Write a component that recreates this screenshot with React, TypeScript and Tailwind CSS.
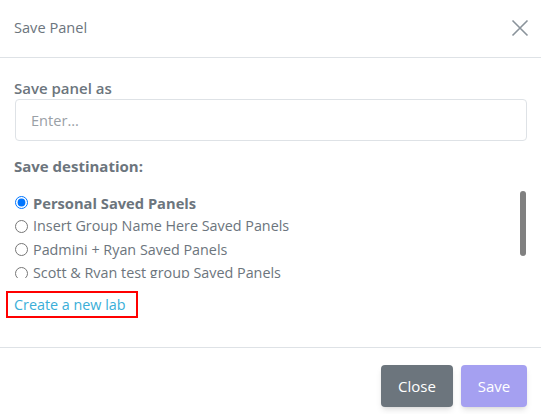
import React from "react";

const rows = [
  { label: "Personal Saved Panels", checked: true },
  { label: "Insert Group Name Here Saved Panels", checked: false },
  { label: "Padmini + Ryan Saved Panels", checked: false },
  { label: "Scott & Ryan test group Saved Panels", checked: false },
];

export default function App() {
  return (
    <div className="w-[541px] h-[414px] bg-white text-[#6c757d] flex flex-col" style={{ fontFamily: '"Open Sans", "Noto Sans", sans-serif' }}>
      <div className="h-[58px] border-b border-[#dee2e6] flex items-center justify-between pl-[14px] pr-[12px] shrink-0">
        <span className="text-[14.6px] text-[#6c757d] mt-[-2px]">Save Panel</span>
        <svg width="18" height="18" viewBox="0 0 18 18" className="text-[#8a939b] mt-[-2px]">
          <path d="M1.5 1.5 L16.5 16.5 M16.5 1.5 L1.5 16.5" stroke="currentColor" strokeWidth="1.6" fill="none" />
        </svg>
      </div>
      <div className="flex flex-col pl-[14px] pr-[14px] pt-[20px] pb-[29px] border-b border-[#dee2e6]">
        <label className="text-[15px] font-semibold leading-[20px]">Save panel as</label>
        <input
          placeholder="Enter..."
          className="mt-[1px] ml-[1px] h-[42px] rounded-[4px] border border-[#dee2e6] px-[15px] text-[14.6px] placeholder:text-[#9aa0a6] outline-none"
        />
        <div className="mt-[15px] text-[15px] font-bold leading-[20px]">Save destination:</div>
        <div className="mt-[15px] flex h-[87px]">
          <div className="flex-1 overflow-hidden">
            {rows.map((r) => (
              <label key={r.label} className="flex items-center gap-[5px] h-[23.5px] whitespace-nowrap">
                <input type="radio" name="dest" defaultChecked={r.checked} className="m-0 ml-[1px] w-[13px] h-[13px]" />
                <span className={r.checked ? "font-bold text-[14.7px]" : "text-[14.35px]"}>{r.label}</span>
              </label>
            ))}
          </div>
          <div className="w-[6px] mr-[1px]">
            <div className="h-[65px] rounded-full bg-[#808080]" />
          </div>
        </div>
        <div className="mt-[13px] self-start ml-[-8px] border-2 border-[#ff0000] h-[27px] pl-[6px] pr-[10px] flex items-center">
          <span className="text-[14.35px] text-[#3aaed8]">Create a new lab</span>
        </div>
      </div>
      <div className="flex-1 flex justify-end items-start gap-[8px] pt-[17px] pr-[14px]">
        <button className="h-[42px] w-[72px] rounded-[4px] bg-[#6c757d] text-white text-[15px] shadow-md">Close</button>
        <button className="h-[42px] w-[66px] rounded-[4px] bg-[#a5a0f1] text-white text-[15px] shadow-md">Save</button>
      </div>
    </div>
  );
}
